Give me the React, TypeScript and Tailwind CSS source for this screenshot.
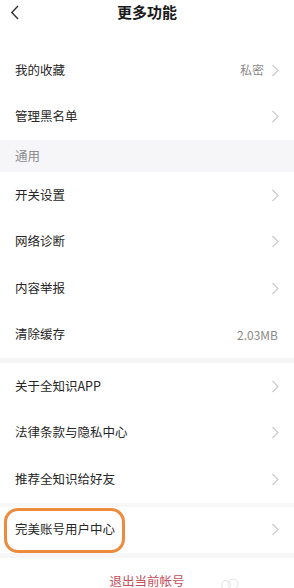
import type { ReactNode } from "react";

type Row = {
  label: string;
  value?: string;
  arrow?: boolean;
};

const topRows: Row[] = [
  { label: "我的收藏", value: "私密", arrow: true },
  { label: "管理黑名单", arrow: true },
];

const generalRows: Row[] = [
  { label: "开关设置", arrow: true },
  { label: "网络诊断", arrow: true },
  { label: "内容举报", arrow: true },
  { label: "清除缓存", value: "2.03MB" },
];

const aboutRows: Row[] = [
  { label: "关于全知识APP", arrow: true },
  { label: "法律条款与隐私中心", arrow: true },
  { label: "推荐全知识给好友", arrow: true },
];

function ChevronRight() {
  return (
    <svg width="8" height="13" viewBox="0 0 8 13" fill="none" className="ml-[7px]">
      <path d="M1.5 1 L7 6.5 L1.5 12" stroke="#c8c8c8" strokeWidth="1.1" />
    </svg>
  );
}

function ListRow({ row, children }: { row: Row; children?: ReactNode }) {
  return (
    <div className="relative flex h-[46.5px] items-center bg-white pl-[15px] pr-[15px]">
      <span className="text-[12.5px] text-[#262626]">{row.label}</span>
      <div className="ml-auto flex items-center">
        {row.value ? (
          <span className="text-[12px] text-[#8a8a8a]">{row.value}</span>
        ) : null}
        {row.arrow ? <ChevronRight /> : <span className="w-[1px]" />}
      </div>
      {children}
    </div>
  );
}

export default function App() {
  return (
    <div
      className="h-[588px] w-[294px] overflow-hidden bg-white"
      style={{ fontFamily: '"Noto Sans CJK SC", "Noto Sans", sans-serif' }}
    >
      <header className="flex h-[47px] items-start pt-[2px]">
        <div className="flex w-[40px] justify-start pl-[10px] pt-[3px]">
          <svg width="10" height="15" viewBox="0 0 10 15" fill="none">
            <path d="M8 1 L1.8 7.5 L8 14" stroke="#333" strokeWidth="1.4" />
          </svg>
        </div>
        <h1 className="flex-1 text-center text-[15px] font-bold leading-[20px] text-[#1a1a1a]">
          更多功能
        </h1>
        <div className="w-[40px]" />
      </header>

      {topRows.map((row) => (
        <ListRow key={row.label} row={row} />
      ))}

      <div className="flex h-[32px] items-center bg-[#f6f6f8] pl-[15px]">
        <span className="text-[12.5px] text-[#8c8c8c]">通用</span>
      </div>

      {generalRows.map((row) => (
        <ListRow key={row.label} row={row} />
      ))}

      <div className="h-[5px] bg-[#f5f5f6]" />

      {aboutRows.map((row) => (
        <ListRow key={row.label} row={row} />
      ))}

      <div className="h-[4px] bg-[#f8f8f8]" />

      <ListRow row={{ label: "完美账号用户中心", arrow: true }}>
        <div className="pointer-events-none absolute left-[4px] top-[1px] h-[45px] w-[121px] rounded-[14px] border-[3px] border-[#ec8b3c]" />
      </ListRow>

      <div className="h-[5px] bg-[#f7f7f7]" />

      <div className="relative flex h-[40px] items-start justify-center pt-[14px]">
        <span className="text-[12.5px] text-[#c4505c]">退出当前帐号</span>
        <svg
          width="20"
          height="14"
          viewBox="0 0 20 14"
          fill="none"
          className="absolute left-[220px] top-[20px]"
        >
          <circle cx="6" cy="7" r="4.5" stroke="#e2e2e2" strokeWidth="1" />
          <circle cx="13" cy="6" r="5" stroke="#e2e2e2" strokeWidth="1" />
        </svg>
      </div>
    </div>
  );
}
